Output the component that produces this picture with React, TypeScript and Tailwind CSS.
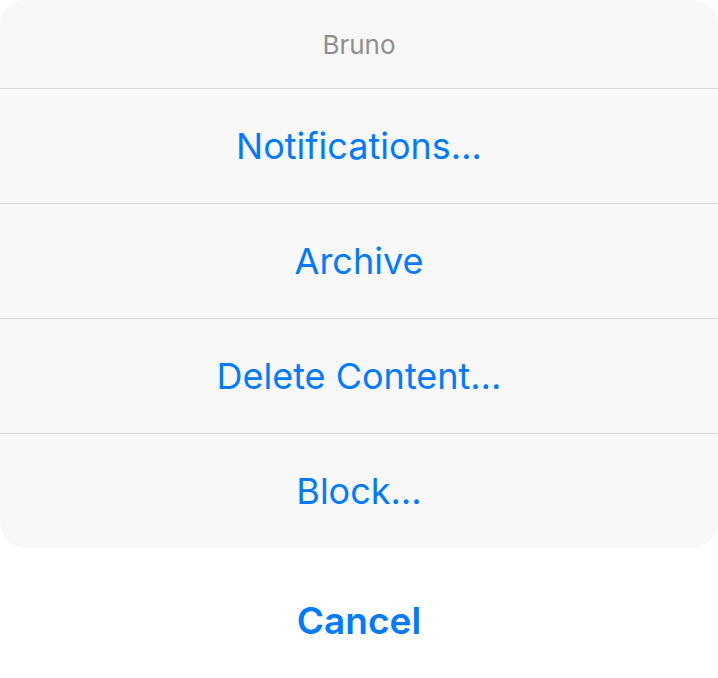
import React from "react";

const items = ["Notifications…", "Archive", "Delete Content…", "Block…"];

export default function App() {
  return (
    <div
      className="w-[718px] h-[678px] bg-white flex flex-col"
      style={{ fontFamily: "Inter, 'Noto Sans', sans-serif" }}
    >
      <div className="bg-[#f8f8f8] rounded-[26px] flex flex-col overflow-hidden">
        <div className="h-[88px] flex items-center justify-center text-[26px] text-[#8f8f8f]">
          Bruno
        </div>
        {items.map((t) => (
          <div
            key={t}
            className="h-[115px] border-t border-[#d9d9d9] flex items-center justify-center text-[36px] text-[#007aff]"
          >
            {t}
          </div>
        ))}
      </div>
      <div className="mt-[16px] h-[114px] flex items-center justify-center text-[37px] font-semibold text-[#007aff]">
        Cancel
      </div>
    </div>
  );
}
